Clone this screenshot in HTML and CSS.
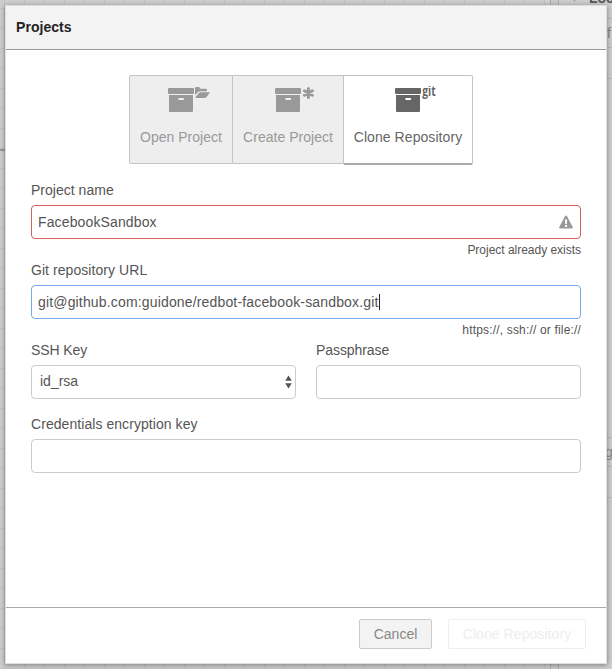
FILE: index.html
```
<!DOCTYPE html>
<html lang="en">
<head>
<meta charset="utf-8">
<title>Projects</title>
<link rel="stylesheet" href="styles.css">
</head>
<body>
<div class="workspace">
  <div class="separator"></div>
  <aside class="sidebar">
    <span class="peek peek-tick">'</span>
    <span class="peek peek-title">Loca</span>
    <span class="peek peek-f">f</span>
    <span class="peek peek-g">ge</span>
  </aside>
  <span class="wire"></span>
</div>
<main class="dialog">
  <header class="dialog-header"><h1>Projects</h1></header>
  <section class="dialog-body">
    <div class="tabs">
      <button class="tab tab-open">
        <svg class="tab-icon" width="46" height="30" viewBox="0 0 46 30"><path d="M1 2h24q1 0 1 1v4q0 1-1 1H1Q0 8 0 7V3q0-1 1-1zM1 9h24v16q0 1-1 1H2q-1 0-1-1z"/><rect class="slot" x="10.3" y="12" width="5.8" height="2" rx=".8"/><path d="M27 9V2.200Q27 1 28.200 1h2.600q1 0 1.200 1.800h5.800q1.200 0 1.200 1.200v1.300h-6.800q-1.200 0-2 .8zM27.300 11.200l4-4.400q.6-.6 1.400-.6h8.700q.9 0 .3.8l-3.400 4.200q-.6.7-1.500.7h-8.900q-1 0-.6-.7z"/></svg>
        <span>Open Project</span>
      </button>
      <button class="tab tab-create">
        <svg class="tab-icon" width="46" height="30" viewBox="0 0 46 30"><path d="M1 2h24q1 0 1 1v4q0 1-1 1H1Q0 8 0 7V3q0-1 1-1zM1 9h24v16q0 1-1 1H2q-1 0-1-1z"/><rect class="slot" x="10.3" y="12" width="5.8" height="2" rx=".8"/><path class="star" d="M33.400 2.400v9.200M29.400 4.700l8 4.600M37.400 4.700l-8 4.600"/></svg>
        <span>Create Project</span>
      </button>
      <button class="tab tab-clone active">
        <svg class="tab-icon" width="46" height="30" viewBox="0 0 46 30"><path d="M1 2h24q1 0 1 1v4q0 1-1 1H1Q0 8 0 7V3q0-1 1-1zM1 9h24v16q0 1-1 1H2q-1 0-1-1z"/><rect class="slot" x="10.3" y="12" width="5.8" height="2" rx=".8"/><text x="27.300" y="10.300" textLength="13.400" lengthAdjust="spacingAndGlyphs">git</text></svg>
        <span>Clone Repository</span>
      </button>
    </div>
    <div class="field">
      <label class="l-name">Project name</label>
      <div class="input invalid"><span class="v-name">FacebookSandbox</span>
        <svg class="warning" width="14" height="14" viewBox="0 0 14 14"><path fill-rule="evenodd" d="M7 .5q.6 0 .9.6l5.800 11q.5 1.200-.8 1.400H1.100Q-.2 13.300.3 12.100l5.800-11Q6.400.5 7 .5zM5.900 4.500l.3 4.500h1.600l.3-4.500zM6 10v2h2v-2z"/></svg>
      </div>
      <small class="s-exists">Project already exists</small>
    </div>
    <div class="field">
      <label class="l-url">Git repository URL</label>
      <div class="input focused"><span class="v-url">git@github.com:guidone/redbot-facebook-sandbox.git</span><i class="caret"></i></div>
      <small class="s-url">https://, ssh:// or file://</small>
    </div>
    <div class="row">
      <div class="field">
        <label class="l-ssh">SSH Key</label>
        <div class="input select"><span class="v-key">id_rsa</span>
          <svg class="arrows" width="7" height="14" viewBox="0 0 7 14"><path d="M3.500.500L6.800 5.700H.200zM.200 8.300h6.600L3.500 13.500z"/></svg>
        </div>
      </div>
      <div class="field">
        <label class="l-pass">Passphrase</label>
        <div class="input"></div>
      </div>
    </div>
    <div class="field">
      <label class="l-cred">Credentials encryption key</label>
      <div class="input"></div>
    </div>
  </section>
  <footer class="dialog-footer">
    <button class="btn cancel"><span>Cancel</span></button>
    <button class="btn clone" disabled><span>Clone Repository</span></button>
  </footer>
</main>
</body>
</html>
```
FILE: styles.css
```
* { box-sizing: border-box; }
body {
  margin: 0;
  width: 612px;
  height: 669px;
  overflow: hidden;
  padding: 5px;
  position: relative;
  font: 14px/20px "Liberation Sans", Helvetica, Arial, sans-serif;
  color: #555;
}
button { font: inherit; margin: 0; padding: 0; }

.workspace {
  position: absolute;
  inset: 0;
  display: flex;
  background-color: #cecece;
  background-image:
    linear-gradient(90deg, #c2c2c2 1px, transparent 1px),
    linear-gradient(#c2c2c2 1px, transparent 1px);
  background-size: 20px 20px;
  background-position: 4px 8px;
}
.separator {
  width: 9px;
  margin-left: 550px;
  background: #c9c9c9;
  border: solid #aaa;
  border-width: 0 1px;
}
.sidebar {
  flex: 1;
  background:
    linear-gradient(#b9b9b9, #b9b9b9) 0 18px / 100% 1px no-repeat,
    linear-gradient(#b9b9b9, #b9b9b9) 0 47px / 100% 1px no-repeat,
    linear-gradient(#b9b9b9, #b9b9b9) 0 78px / 100% 1px no-repeat,
    linear-gradient(#b9b9b9, #b9b9b9) 0 437px / 100% 1px no-repeat,
    linear-gradient(#b9b9b9, #b9b9b9) 0 466px / 100% 1px no-repeat,
    linear-gradient(#b9b9b9, #b9b9b9) 0 497px / 100% 1px no-repeat,
    #cecece;
}
.peek { position: absolute; white-space: nowrap; color: #888; }
.peek-tick { left: 573px; top: -7px; }
.peek-title { left: 589px; top: -12px; font-weight: bold; color: #555; }
.peek-f { left: 607px; top: 23px; }
.peek-g { left: 605px; top: 442px; }
.wire { position: absolute; left: 0; top: 149px; width: 5px; height: 2px; background: #999; }

.dialog {
  position: relative;
  display: flex;
  flex-direction: column;
  width: 602px;
  height: 659px;
  background: #fff;
  border: 1px solid #dedede;
  box-shadow: 0 1px 5px rgba(0, 0, 0, .4);
}
.dialog-header {
  height: 44px;
  padding: 11px 10px;
  background: #f3f3f3;
  border-bottom: 1px solid #999;
}
h1 { margin: 0; font-size: 14px; line-height: 20px; color: #222; letter-spacing: .05px; }

.dialog-body { flex: 1; padding: 25px 25px 0; }
.tabs { display: flex; width: 344px; height: 90px; margin: 0 auto 15px 98px; }
.tab {
  height: 89px;
  padding-top: 10px;
  display: flex;
  flex-direction: column;
  align-items: center;
  gap: 11px;
  background: #eee;
  border: 1px solid #c4c4c4;
  color: #999;
  fill: #999;
  white-space: nowrap;
}
.tab + .tab { border-left-width: 0; }
.tab-open { width: 104px; border-radius: 2px 0 0 2px; }
.tab-create { width: 111px; }
.tab-clone { width: 129px; border-radius: 0 2px 2px 0; }
.tab.active {
  height: 90px;
  background: #fff;
  border-bottom: 2px solid #aaa;
  color: #666;
  fill: #666;
}
.tab-icon { display: block; margin-left: 19px; }
.tab-open .tab-icon { margin-left: 20px; }
.tab-create .tab-icon { margin-left: 19px; }
.tab-open span, .tab-create span { letter-spacing: .02px; }
.tab-clone span { letter-spacing: .07px; }
.tab-icon .slot { fill: #eee; }
.active .slot { fill: #fff; }
.tab-icon .star { stroke: #999; stroke-width: 3; stroke-linecap: round; }
.tab-icon text { font: bold 15px "Open Sans", sans-serif; }

label { display: block; height: 20px; margin-bottom: 5px; white-space: nowrap; }
.l-name { letter-spacing: .02px; }
.l-url { letter-spacing: .06px; }
.l-ssh { letter-spacing: -.1px; }
.l-pass { letter-spacing: -.07px; }
.l-cred { letter-spacing: .06px; }
.v-name { letter-spacing: .13px; }
.v-url { letter-spacing: .16px; }
.v-key { margin-top: -2px; }
.s-exists { letter-spacing: -.02px; }
.s-url { letter-spacing: .17px; }
.field { margin-bottom: 15px; }
.input {
  display: flex;
  align-items: center;
  height: 34px;
  padding: 0 6px;
  border: 1px solid #ccc;
  border-radius: 4px;
  white-space: nowrap;
}
.invalid { border-color: #d6615f; padding-right: 7px; }
.focused { border-color: #74a9e6; }
.caret { width: 1px; height: 16px; background: #222; }
.warning { margin-left: auto; fill: #999; }
.select { padding: 0 3px 0 8px; }
.arrows { margin-left: auto; fill: #555; }
small {
  display: block;
  height: 21px;
  padding-top: 1px;
  font-size: 12px;
  line-height: 20px;
  text-align: right;
  white-space: nowrap;
}
.field:has(small) { margin-bottom: 0; }
.row { display: grid; grid-template-columns: 1fr 1fr; gap: 20px; }

.dialog-footer {
  height: 56px;
  display: flex;
  justify-content: flex-end;
  gap: 16px;
  padding: 11px 20px 0 0;
  border-top: 1px solid #aaa;
}
.btn { height: 30px; border: 1px solid #ccc; border-radius: 2px; white-space: nowrap; }
.cancel { width: 73px; background: #f3f3f3; color: #888; }
.clone { width: 138px; background: #fff; border-color: #eee; color: #eee; letter-spacing: .07px; }
```
